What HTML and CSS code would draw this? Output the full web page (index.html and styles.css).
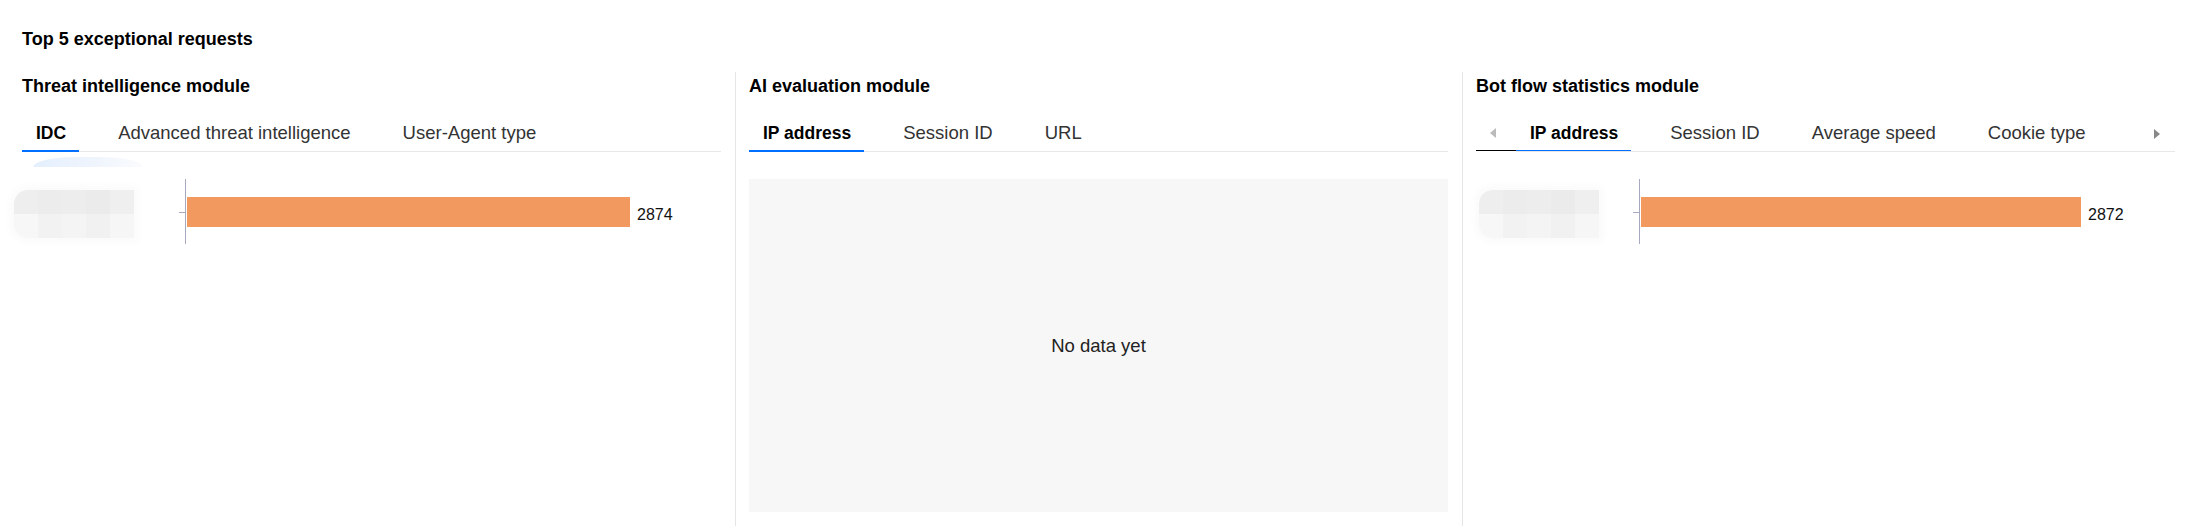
FILE: index.html
```html
<!DOCTYPE html>
<html lang="en">
<head>
    <meta charset="UTF-8">
    <meta name="viewport" content="width=device-width, initial-scale=1.0">
    <title>Top 5 exceptional requests</title>
    <link rel="stylesheet" href="styles.css">
</head>
<body>
    <h2 class="page-title">Top 5 exceptional requests</h2>

    <div class="modules">
        <!-- Threat intelligence -->
        <div class="module">
            <h3 class="module-title">Threat intelligence module</h3>
            <div class="tabs">
                <div class="tab active">IDC</div>
                <div class="tab">Advanced threat intelligence</div>
                <div class="tab">User-Agent type</div>
            </div>
            <div class="chart">
                <div class="glow"></div>
                <div class="chart-row">
                    <div class="chart-label">
                        <div class="blur blur-wide">
                            <span></span><span></span><span></span><span></span><span></span>
                            <span></span><span></span><span></span><span></span><span></span>
                        </div>
                    </div>
                    <div class="axis"></div>
                    <div class="bar" style="width: 443px"></div>
                    <span class="bar-value">2874</span>
                </div>
            </div>
        </div>

        <!-- AI evaluation -->
        <div class="module">
            <h3 class="module-title">AI evaluation module</h3>
            <div class="tabs">
                <div class="tab active">IP address</div>
                <div class="tab">Session ID</div>
                <div class="tab">URL</div>
            </div>
            <div class="empty">No data yet</div>
        </div>

        <!-- Bot flow statistics -->
        <div class="module">
            <h3 class="module-title">Bot flow statistics module</h3>
            <div class="tabs-scroll">
                <div class="tabs-arrow prev"><span class="arrow-left"></span></div>
                <div class="tabs tabs-inner">
                    <div class="tab active">IP address</div>
                    <div class="tab">Session ID</div>
                    <div class="tab">Average speed</div>
                    <div class="tab">Cookie type</div>
                </div>
                <div class="tabs-arrow next"><span class="arrow-right"></span></div>
            </div>
            <div class="chart">
                <div class="chart-row">
                    <div class="chart-label">
                        <div class="blur">
                            <span></span><span></span><span></span><span></span><span></span>
                            <span></span><span></span><span></span><span></span><span></span>
                        </div>
                    </div>
                    <div class="axis"></div>
                    <div class="bar" style="width: 440px"></div>
                    <span class="bar-value">2872</span>
                </div>
            </div>
        </div>
    </div>
</body>
</html>
```

FILE: styles.css
```css
body {
    font-family: "Liberation Sans", Arial, sans-serif;
    margin: 0;
    padding: 25px 11px 0 22px;
    color: #000;
    background: #fff;
    overflow: hidden;
    height: 501px;
}

.page-title {
    margin: 0;
    font-size: 18px;
    line-height: 28px;
    font-weight: bold;
}

.modules {
    display: flex;
    margin-top: 19px;
}

.module {
    flex: 1;
    min-width: 0;
    min-height: 460px;
}

.module:first-child {
    padding-right: 14px;
}

.module + .module {
    border-left: 1px solid #e5e5e5;
    padding-left: 13px;
}

.module:nth-child(2) {
    padding-right: 14px;
}

.module-title {
    margin: 0;
    font-size: 18px;
    line-height: 28px;
    font-weight: bold;
}

/* tabs */
.tabs {
    display: flex;
    gap: 25px;
    margin-top: 16px;
    border-bottom: 1px solid #e7e7e7;
    white-space: nowrap;
}

.tab {
    padding: 0 13px 0 14px;
    font-size: 18.5px;
    line-height: 34px;
    color: #333;
    border-bottom: 2px solid transparent;
    margin-bottom: -1px;
    cursor: pointer;
}

.tab.active {
    color: #000;
    font-weight: bold;
    font-size: 17.5px;
    border-bottom-color: #006eff;
}

.tabs-scroll {
    display: flex;
    margin-top: 16px;
}

.tabs-scroll .tabs-inner {
    flex: 1;
    min-width: 0;
    margin-top: 0;
    overflow: hidden;
}

.tabs-arrow {
    display: flex;
    align-items: center;
    justify-content: center;
    height: 35px;
    border-bottom: 1px solid #e7e7e7;
}

.tabs-arrow.prev {
    width: 40px;
    justify-content: flex-start;
    padding-left: 14px;
    box-sizing: border-box;
    border-bottom-color: #000;
}

.tabs-arrow.next {
    width: 36px;
}

.arrow-left {
    width: 0;
    height: 0;
    border-top: 5px solid transparent;
    border-bottom: 5px solid transparent;
    border-right: 6px solid #bbb;
}

.arrow-right {
    width: 0;
    height: 0;
    border-top: 5px solid transparent;
    border-bottom: 5px solid transparent;
    border-left: 6px solid #888;
}

/* bar chart */
.chart {
    position: relative;
    padding-top: 27px;
}

.chart-row {
    display: flex;
    align-items: center;
    height: 65px;
}

.chart-label {
    width: 163px;
    flex-shrink: 0;
}

.blur {
    display: grid;
    grid-template-columns: repeat(5, 24px);
    grid-template-rows: 24px 24px;
    width: 120px;
    margin-left: 3px;
    margin-top: 4px;
    border-radius: 14px 0 0 14px;
    overflow: hidden;
    box-shadow: 0 0 8px 4px #fafafa;
}

.blur-wide {
    margin-left: -8px;
}

.blur span:nth-child(1) { background: #eeeeee; }
.blur span:nth-child(2) { background: #ececec; }
.blur span:nth-child(3) { background: #ededed; }
.blur span:nth-child(4) { background: #ebebeb; }
.blur span:nth-child(5) { background: #efefef; }
.blur span:nth-child(6) { background: #f7f7f7; }
.blur span:nth-child(7) { background: #f2f2f2; }
.blur span:nth-child(8) { background: #f4f4f4; }
.blur span:nth-child(9) { background: #f1f1f1; }
.blur span:nth-child(10) { background: #f6f6f6; }

.glow {
    position: absolute;
    top: 5px;
    left: 11px;
    width: 110px;
    height: 10px;
    border-radius: 60px 60px 0 0 / 14px 14px 0 0;
    background: linear-gradient(to right, #e4effd, #eef4fd 50%, #fafbfd);
}

.axis {
    position: relative;
    width: 1px;
    height: 65px;
    background: #a6a9bf;
    flex-shrink: 0;
}

.axis::before {
    content: "";
    position: absolute;
    top: 33px;
    left: -6px;
    width: 6px;
    height: 1px;
    background: #a6a9bf;
}

.bar {
    height: 30px;
    margin-left: 1px;
    background: #f2995f;
}

.bar-value {
    margin-left: 7px;
    font-size: 16px;
    color: #111;
    margin-top: 6px;
}

/* empty state */
.empty {
    margin-top: 27px;
    height: 333px;
    background: #f7f7f7;
    display: flex;
    align-items: center;
    justify-content: center;
    font-size: 18.5px;
    color: #222;
}
```
